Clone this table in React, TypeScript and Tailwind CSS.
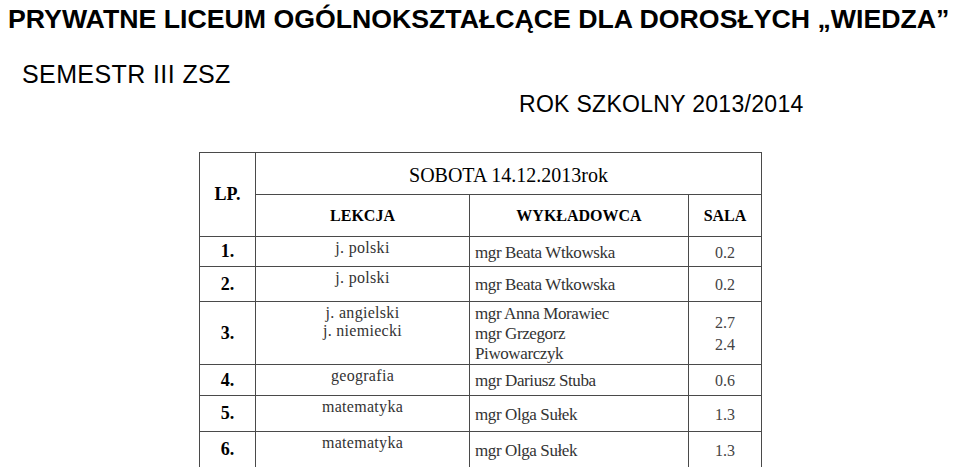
import React from "react";

/* ── Data ───────────────────────────────────────────────────── */
interface Lesson {
  lp: string;
  subjects: string[];
  teachers: string[];
  rooms: string[];
  h: string;
}

const lessons: Lesson[] = [
  { lp: "1.", subjects: ["j. polski"], teachers: ["mgr Beata Wtkowska"], rooms: ["0.2"], h: "h-[30px]" },
  { lp: "2.", subjects: ["j. polski"], teachers: ["mgr Beata Wtkowska"], rooms: ["0.2"], h: "h-[35px]" },
  {
    lp: "3.",
    subjects: ["j. angielski", "j. niemiecki"],
    teachers: ["mgr Anna Morawiec", "mgr Grzegorz", "Piwowarczyk"],
    rooms: ["2.7", "2.4"],
    h: "h-[62px]",
  },
  { lp: "4.", subjects: ["geografia"], teachers: ["mgr Dariusz Stuba"], rooms: ["0.6"], h: "h-[31px]" },
  { lp: "5.", subjects: ["matematyka"], teachers: ["mgr Olga Sułek"], rooms: ["1.3"], h: "h-[36px]" },
  { lp: "6.", subjects: ["matematyka"], teachers: ["mgr Olga Sułek"], rooms: ["1.3"], h: "h-[36px]" },
];

const cell = "border border-[#4a4a4a] p-0";

/* ── Page ───────────────────────────────────────────────────── */
export default function App() {
  return (
    <div className="w-[959px] h-[467px] bg-white overflow-hidden text-black">
      {/* Header */}
      <div className="font-['Liberation_Sans',Arial,sans-serif]">
        <h1 className="pl-[8px] pt-[4px] text-[26.7px] leading-[30px] font-bold whitespace-nowrap">
          PRYWATNE LICEUM OGÓLNOKSZTAŁCĄCE DLA DOROSŁYCH „WIEDZA”
        </h1>
        <p className="pl-[22px] mt-[28px] text-[25px] leading-[24px] tracking-[0.4px] whitespace-nowrap">SEMESTR III ZSZ</p>
        <p className="pl-[519px] mt-[6px] text-[23px] leading-[24px] tracking-[0.3px] whitespace-nowrap">ROK SZKOLNY 2013/2014</p>
      </div>

      {/* Timetable */}
      <table className="ml-[199px] mt-[36px] border-collapse table-fixed w-[562px] font-['Liberation_Serif',serif]">
        <colgroup>
          <col className="w-[56px]" />
          <col className="w-[214px]" />
          <col className="w-[219px]" />
          <col className="w-[73px]" />
        </colgroup>
        <thead>
          <tr className="h-[42px]">
            <th rowSpan={2} className={`${cell} text-[18px] font-bold text-center align-middle`}>
              LP.
            </th>
            <th colSpan={3} className={`${cell} text-[20px] font-normal text-center align-middle pt-[2px]`}>
              SOBOTA 14.12.2013rok
            </th>
          </tr>
          <tr className="h-[42px] text-[16px] font-semibold">
            <th className={`${cell} text-center align-middle`}>LEKCJA</th>
            <th className={`${cell} text-center align-middle`}>WYKŁADOWCA</th>
            <th className={`${cell} text-center align-middle`}>SALA</th>
          </tr>
        </thead>
        <tbody>
          {lessons.map(l => (
            <tr key={l.lp} className={l.h}>
              <td className={`${cell} text-center align-middle text-[18px] font-bold`}>{l.lp}</td>
              <td className={`${cell} text-center align-top text-[16px] leading-[18px] tracking-[0.3px] text-[#333] pt-[2px]`}>
                {l.subjects.map(s => <div key={s}>{s}</div>)}
              </td>
              <td className={`${cell} align-middle text-[17px] leading-[20px] tracking-[-0.4px] text-[#333] pl-[5px] pt-[2px]`}>
                {l.teachers.map(t => <div key={t}>{t}</div>)}
              </td>
              <td className={`${cell} text-center align-middle text-[16px] leading-[22px] text-[#444] pt-[2px]`}>
                {l.rooms.map(r => <div key={r}>{r}</div>)}
              </td>
            </tr>
          ))}
        </tbody>
      </table>
    </div>
  );
}
